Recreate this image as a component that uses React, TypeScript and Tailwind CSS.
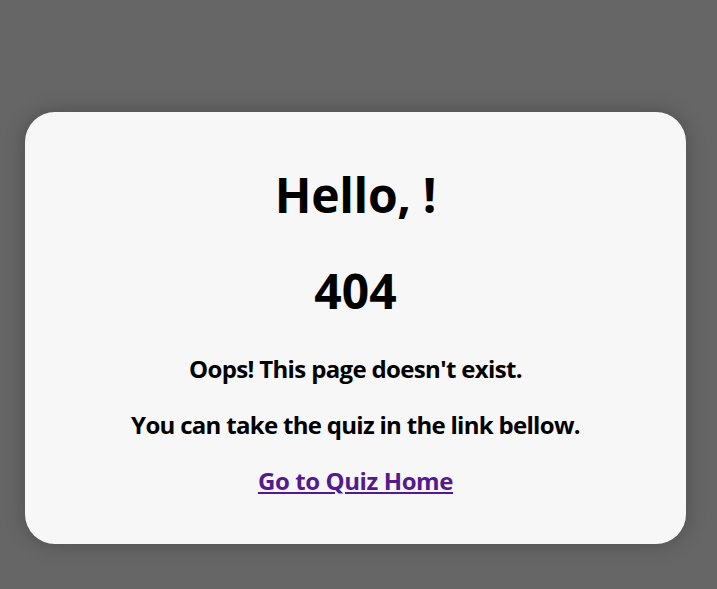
export default function App() {
  return (
    <div className="min-h-screen w-full bg-[#666666] pt-[112px] pl-[25px]" style={{ fontFamily: '"Open Sans", "Noto Sans", sans-serif' }}>
      <div className="w-[661px] rounded-[30px] bg-[#f7f7f7] pt-[51px] pb-[47px] text-center text-black shadow-[0_0_20px_rgba(0,0,0,0.25)]">
        <h1 className="text-[48px] leading-[64px] font-bold tracking-[-0.3px]">Hello, !</h1>
        <h1 className="mt-[32px] text-[48px] leading-[64px] font-bold">404</h1>
        <p className="mt-[30px] text-[24px] leading-[32px] font-bold tracking-[-0.65px]">Oops! This page doesn't exist.</p>
        <p className="mt-[24px] text-[24px] leading-[32px] font-bold tracking-[-0.7px]">You can take the quiz in the link bellow.</p>
        <p className="mt-[24px] text-[24px] leading-[32px] font-bold tracking-[-0.4px]">
          <a href="#" className="text-[#551a8b] underline">Go to Quiz Home</a>
        </p>
      </div>
    </div>
  );
}
